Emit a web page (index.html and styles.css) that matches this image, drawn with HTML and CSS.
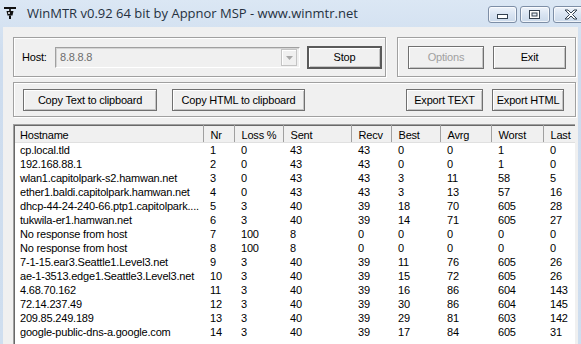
FILE: index.html
```html
<!DOCTYPE html>
<html lang="en">
<head>
    <meta charset="UTF-8">
    <title>WinMTR</title>
    <link rel="stylesheet" href="styles.css">
</head>
<body>
    <div class="window">
        <div class="titlebar">
            <svg class="app-icon" width="12" height="12" viewBox="0 0 12 12">
                <rect x="0" y="0" width="12" height="2" fill="#111"/>
                <rect x="5" y="2" width="2" height="2" fill="#333"/>
                <path d="M2.5 4 H9.5 L8.5 8.5 H3.5 Z" fill="#111"/>
                <rect x="4" y="5" width="2" height="2" fill="#bbb"/>
                <rect x="5" y="8.5" width="2" height="3.5" fill="#111"/>
            </svg>
            <span class="title">WinMTR v0.92 64 bit by Appnor MSP - www.winmtr.net</span>
            <div class="caption-buttons">
                <div class="cap-btn cap-min">
                    <svg width="12" height="6" viewBox="0 0 12 6"><rect x="0.5" y="0.5" width="10" height="4" fill="#fff" stroke="#33404f"/></svg>
                </div>
                <div class="cap-btn cap-max">
                    <svg width="12" height="10" viewBox="0 0 12 10"><rect x="0.5" y="0.5" width="10" height="8" fill="#fff" stroke="#33404f"/><rect x="3" y="3" width="5" height="3" fill="#e4ecf6" stroke="#33404f"/></svg>
                </div>
                <div class="cap-btn cap-close">
                    <svg width="14" height="11" viewBox="0 0 14 11"><path d="M1 1 L4 1 L7 4 L10 1 L13 1 L8.5 5.5 L13 10 L10 10 L7 7 L4 10 L1 10 L5.5 5.5 Z" fill="#fff" stroke="#33404f" stroke-linejoin="round"/></svg>
                </div>
            </div>
        </div>

        <div class="client">
            <div class="top-row">
                <div class="group host-group">
                    <span class="host-label">Host:</span>
                    <div class="combo">
                        <span class="combo-text">8.8.8.8</span>
                        <span class="combo-arrow">
                            <svg width="7" height="4" viewBox="0 0 7 4"><path d="M0 0 H7 L3.5 4 Z" fill="#a7a7a7"/></svg>
                        </span>
                    </div>
                    <button class="btn btn-default btn-stop">Stop</button>
                </div>
                <div class="group side-group">
                    <button class="btn btn-options" disabled>Options</button>
                    <button class="btn btn-exit">Exit</button>
                </div>
            </div>

            <div class="group action-group">
                <button class="btn btn-copy-text">Copy Text to clipboard</button>
                <button class="btn btn-copy-html">Copy HTML to clipboard</button>
                <span class="spacer"></span>
                <button class="btn btn-export-text">Export TEXT</button>
                <button class="btn btn-export-html">Export HTML</button>
            </div>

            <div class="list">
                <table class="hops">
                    <colgroup>
                        <col class="c-host"><col class="c-nr"><col class="c-loss"><col class="c-sent"><col class="c-recv">
                        <col class="c-best"><col class="c-avrg"><col class="c-worst"><col class="c-last">
                    </colgroup>
                    <thead>
                        <tr>
                            <th>Hostname</th><th>Nr</th><th>Loss %</th><th>Sent</th><th>Recv</th>
                            <th>Best</th><th>Avrg</th><th>Worst</th><th>Last</th>
                        </tr>
                    </thead>
                    <tbody>
                        <tr><td>cp.local.tld</td><td>1</td><td>0</td><td>43</td><td>43</td><td>0</td><td>0</td><td>1</td><td>0</td></tr>
                        <tr><td>192.168.88.1</td><td>2</td><td>0</td><td>43</td><td>43</td><td>0</td><td>0</td><td>1</td><td>0</td></tr>
                        <tr><td>wlan1.capitolpark-s2.hamwan.net</td><td>3</td><td>0</td><td>43</td><td>43</td><td>3</td><td>11</td><td>58</td><td>5</td></tr>
                        <tr><td>ether1.baldi.capitolpark.hamwan.net</td><td>4</td><td>0</td><td>43</td><td>43</td><td>3</td><td>13</td><td>57</td><td>16</td></tr>
                        <tr><td>dhcp-44-24-240-66.ptp1.capitolpark....</td><td>5</td><td>3</td><td>40</td><td>39</td><td>18</td><td>70</td><td>605</td><td>28</td></tr>
                        <tr><td>tukwila-er1.hamwan.net</td><td>6</td><td>3</td><td>40</td><td>39</td><td>14</td><td>71</td><td>605</td><td>27</td></tr>
                        <tr><td>No response from host</td><td>7</td><td>100</td><td>8</td><td>0</td><td>0</td><td>0</td><td>0</td><td>0</td></tr>
                        <tr><td>No response from host</td><td>8</td><td>100</td><td>8</td><td>0</td><td>0</td><td>0</td><td>0</td><td>0</td></tr>
                        <tr><td>7-1-15.ear3.Seattle1.Level3.net</td><td>9</td><td>3</td><td>40</td><td>39</td><td>11</td><td>76</td><td>605</td><td>26</td></tr>
                        <tr><td>ae-1-3513.edge1.Seattle3.Level3.net</td><td>10</td><td>3</td><td>40</td><td>39</td><td>15</td><td>72</td><td>605</td><td>26</td></tr>
                        <tr><td>4.68.70.162</td><td>11</td><td>3</td><td>40</td><td>39</td><td>16</td><td>86</td><td>604</td><td>143</td></tr>
                        <tr><td>72.14.237.49</td><td>12</td><td>3</td><td>40</td><td>39</td><td>30</td><td>86</td><td>604</td><td>145</td></tr>
                        <tr><td>209.85.249.189</td><td>13</td><td>3</td><td>40</td><td>39</td><td>29</td><td>81</td><td>603</td><td>142</td></tr>
                        <tr><td>google-public-dns-a.google.com</td><td>14</td><td>3</td><td>40</td><td>39</td><td>17</td><td>84</td><td>605</td><td>31</td></tr>
                    </tbody>
                </table>
            </div>
        </div>
    </div>
</body>
</html>
```

FILE: styles.css
```css
* {
    margin: 0;
    padding: 0;
    box-sizing: border-box;
}

body {
    width: 581px;
    height: 344px;
    overflow: hidden;
    font-family: "Liberation Sans", Arial, sans-serif;
    font-size: 11px;
    letter-spacing: -0.2px;
    color: #000;
    background: #d3e1f1;
}

.window {
    height: 344px;
    padding: 0 3px;
    background: linear-gradient(#dbe7f4, #cddcee 60px, #cfdeef);
    display: flex;
    flex-direction: column;
}

/* title bar */

.titlebar {
    height: 27px;
    display: flex;
    align-items: flex-start;
    margin: 0 -3px;
    padding-left: 4px;
    overflow: hidden;
    white-space: nowrap;
}

.app-icon {
    margin-top: 7px;
    flex: none;
}

.title {
    font-family: "Open Sans", "Noto Sans", sans-serif;
    font-size: 13px;
    letter-spacing: 0;
    color: #25313f;
    margin-left: 11px;
    margin-top: 4px;
}

.caption-buttons {
    margin-left: auto;
    margin-top: 6px;
    display: flex;
    gap: 3px;
    margin-right: -30px;
}

.cap-btn {
    height: 17px;
    border: 1px solid #7d8ea6;
    border-radius: 3px;
    background: linear-gradient(#eef3fa, #d9e4f2 50%, #cbd9ea);
    box-shadow: inset 0 0 0 1px rgba(255, 255, 255, 0.7);
    display: flex;
    align-items: center;
    justify-content: center;
}

.cap-min {
    width: 29px;
    padding-top: 5px;
}

.cap-max {
    width: 30px;
}

.cap-close {
    width: 58px;
    justify-content: flex-start;
    padding-left: 10px;
}

/* client area */

.client {
    flex: 1;
    background: #f0f0f0;
    padding: 10px 2px 0 10px;
    overflow: hidden;
}

.group {
    border: 1px solid #a0a0a0;
    box-shadow: inset 1px 1px 0 #fff, 1px 1px 0 #fff;
    display: flex;
    align-items: center;
}

.top-row {
    display: flex;
    gap: 11px;
}

.host-group {
    width: 373px;
    height: 40px;
    padding-left: 8px;
}

.host-label {
    width: 33px;
}

.combo {
    width: 245px;
    height: 21px;
    border: 1px solid;
    border-color: #a0a0a0 #fff #fff #a0a0a0;
    box-shadow: inset 1px 1px 0 #d4d4d4;
    background: #f0f0f0;
    display: flex;
    align-items: center;
    padding: 0 2px 0 4px;
}

.combo-text {
    color: #6d6d6d;
    flex: 1;
}

.combo-arrow {
    width: 16px;
    height: 17px;
    border: 1px solid #c4c4c4;
    background: #f0f0f0;
    box-shadow: inset 1px 1px 0 #fff;
    display: flex;
    align-items: center;
    justify-content: center;
    padding-top: 1px;
}

.btn {
    font-family: inherit;
    font-size: 11px;
    letter-spacing: -0.2px;
    color: #000;
    height: 22px;
    background: #f0f0f0;
    border: 1px solid #707070;
    box-shadow: inset 1px 1px 0 #fff, inset -1px -1px 0 #c4c4c4;
    flex: none;
}

.btn:disabled {
    color: #a0a0a0;
}

.btn-default {
    border: 2px solid #5a5a5a;
    height: 23px;
}

.btn-stop {
    width: 75px;
    margin-left: 7px;
}

.side-group {
    width: 179px;
    height: 40px;
    padding-left: 10px;
    gap: 9px;
}

.btn-options {
    width: 76px;
    height: 23px;
}

.btn-exit {
    width: 73px;
    height: 23px;
}

.action-group {
    margin-top: 5px;
    height: 35px;
    padding: 0 11px 0 9px;
    gap: 15px;
}

.spacer {
    flex: 1;
}

.btn-copy-text {
    width: 134px;
}

.btn-copy-html {
    width: 133px;
}

.btn-export-text {
    width: 77px;
    margin-right: -6px;
}

.btn-export-html {
    width: 72px;
}

/* hop list */

.list {
    margin-top: 7px;
    width: 562px;
    height: 230px;
    background: #fff;
    border-top: 1px solid #a0a0a0;
    border-left: 1px solid #a0a0a0;
    box-shadow: inset 1px 1px 0 #696969;
    padding-left: 1px;
    overflow: hidden;
}

.hops {
    border-collapse: collapse;
    table-layout: fixed;
    width: 560px;
    white-space: nowrap;
}

.c-host { width: 188px; }
.c-nr { width: 31px; }
.c-loss { width: 49px; }
.c-sent { width: 68px; }
.c-recv { width: 40px; }
.c-best { width: 49px; }
.c-avrg { width: 51px; }
.c-worst { width: 52px; }
.c-last { width: 32px; }

.hops th {
    height: 17px;
    background: #f0f0f0;
    font-weight: normal;
    text-align: left;
    padding: 1px 0 0 7px;
    border-top: 1px solid #696969;
    border-right: 1px solid #a0a0a0;
    border-bottom: 1px solid #e0e0e0;
    overflow: hidden;
}

.hops th:first-child,
.hops td:first-child {
    padding-left: 5px;
}

.hops td {
    height: 14px;
    line-height: 14px;
    padding: 0 0 0 7px;
    overflow: hidden;
}
```
